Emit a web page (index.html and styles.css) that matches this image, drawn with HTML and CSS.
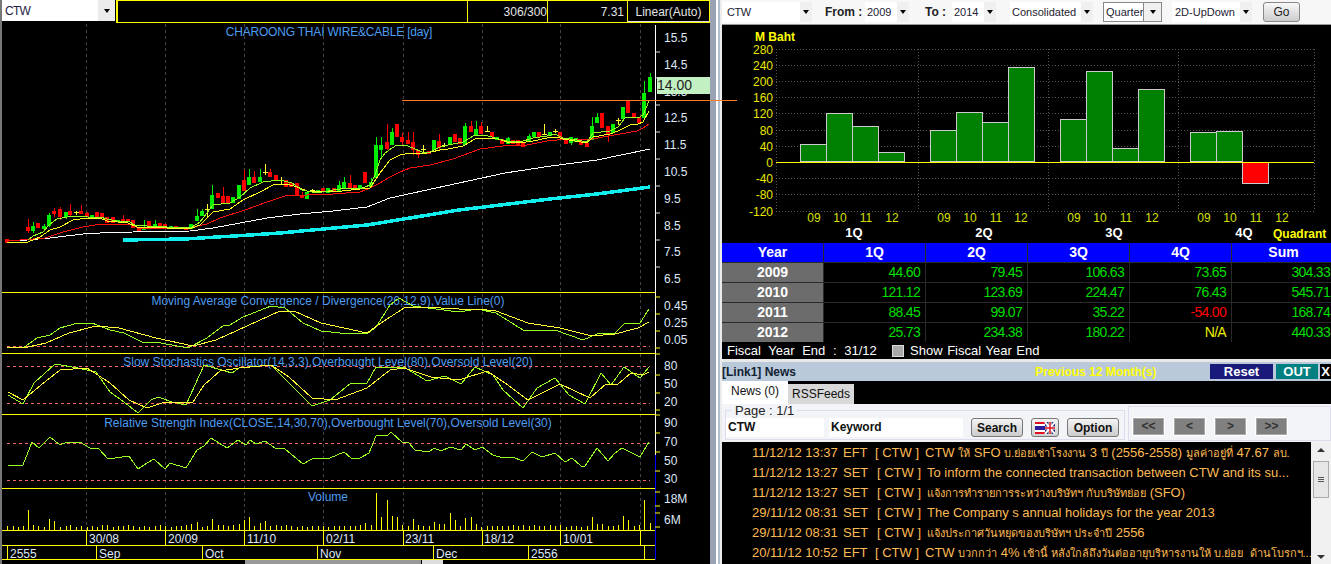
FILE: index.html
```html
<!DOCTYPE html>
<html lang="th">
<head>
    <meta charset="UTF-8">
    <meta name="viewport" content="width=device-width, initial-scale=1.0">
    <title>CTW</title>
    <link rel="stylesheet" href="styles.css">
</head>
<body>
<div class="app">
    <section class="left">
        <div class="left-bar">
            <div class="combo sym-combo"><span>CTW</span><i class="arrow"></i></div>
            <div class="stat-box">
                <div class="stat-fill"></div>
                <div class="stat">306/300</div>
                <div class="stat stat-atr">7.31</div>
                <div class="stat stat-scale">Linear(Auto)</div>
            </div>
        </div>

        <svg class="stock" width="708" height="538" viewBox="2 22 708 538">
            <!-- vertical grid -->
            <path class="grid" d="M86 24V530M165 24V530M244 24V530M323 24V530M403 24V530M482 24V530M560 24V530M640 24V530"/>

            <!-- price panel -->
            <text class="title title-main" x="329" y="36" text-anchor="middle">CHAROONG THAI WIRE&amp;CABLE [day]</text>
            <path class="wick-red" d="M28 219V233M54 208V217M60 207V220M70 204V216M81 205V214M87 212V217M123 215V222M223 187V204M244 170V191M254 171V183M270 169V177M302 192V198M350 175V188M387 124V150M402 133V145M408 132V144M413 132V155M418 150V158M439 134V150M471 121V132M481 122V134M608 126V142"/>
            <path class="wick-green" d="M33 222V233M44 224V229M49 213V227M66 212V219M144 220V230M155 220V227M197 209V221M202 209V216M212 185V209M249 169V185M260 169V182M339 181V192M344 177V188M371 178V187M376 137V178M381 137V157M392 128V145M465 123V145M476 121V135M508 137V144M529 134V142M571 137V145M592 117V140M597 113V123M644 81V118M650 73V92"/>
            <path class="body-red" d="M7 239V243M28 227V231M38 223V228M54 211V214M60 209V217M70 211V215M81 211V214M87 213V217M97 212V217M102 213V217M107 217V223M113 217V223M123 219V222M128 219V221M133 220V228M139 227V231M149 221V226M160 223V226M165 224V229M176 226V228M186 227V230M218 193V198M223 196V203M228 196V203M244 180V191M254 177V183M270 172V177M276 175V180M286 180V187M291 183V187M297 183V195M302 195V198M323 188V192M334 188V192M350 183V188M355 185V189M365 172V183M387 142V149M397 124V137M402 137V142M408 140V144M413 142V150M418 150V155M429 151V154M439 141V148M455 134V142M460 138V144M471 126V132M481 126V134M492 132V137M502 139V144M513 140V144M518 140V145M523 143V147M539 132V137M560 132V138M566 140V144M581 141V145M587 143V147M602 113V128M608 126V134M628 101V113M634 113V118M639 117V123"/>
            <path class="body-green" d="M33 226V231M44 226V229M49 215V226M66 212V217M92 215V217M118 220V222M144 227V230M155 224V227M171 226V229M181 227V229M191 224V229M197 216V221M202 211V216M212 195V209M233 197V203M239 185V199M249 177V185M260 177V182M307 192V199M318 190V193M328 188V193M339 185V192M344 182V188M360 185V188M371 182V187M376 145V178M381 145V150M392 132V145M434 140V150M450 137V145M465 126V145M476 129V135M497 137V140M508 138V144M529 136V142M534 132V137M550 132V136M571 137V143M576 138V142M592 126V140M597 117V123M613 124V133M623 107V119M644 93V118M650 77V92"/>
            <path class="doji" d="M76 211V215M74 212h5M207 204V218M205 209h5M265 164V175M263 172h5M281 177V185M279 180h5M312 189V192M310 190h5M423 145V153M421 149h5M444 143V147M442 145h5M487 126V132M485 131h5M544 124V135M542 134h5M555 129V133M553 131h5M618 118V125M616 120h5"/>

            <polyline class="ma-white" points="7,240 27,240 50,238 83,234 100,233 133,232 190,231 213,228 240,223 267,218 300,214 333,211 367,207 390,198 459,183 505,173 551,166 597,160 650,149"/>
            <polyline class="ma-red" points="7,241 33,239 45,238 63,232 83,227 95,225 110,224 133,224 138,229 193,227 207,224 220,218 245,210 267,202 285,196 307,195 333,194 360,192 370,188 380,183 390,177 400,172 410,168 430,165 453,159 480,149 503,146 527,145 547,141 567,139 587,140 603,137 620,134 637,131 643,128 649,124"/>
            <polyline class="ma-mid" points="7,242 28,242 40,237 50,230 60,227 73,220 87,218 100,218 107,221 128,223 137,227 167,228 192,228 200,225 213,212 230,209 243,200 260,192 273,185 287,184 297,187 307,191 333,192 360,189 370,188 380,173 390,160 400,155 410,153 422,154 440,150 448,149 463,146 475,139 495,138 507,142 520,143 533,141 547,138 557,137 563,139 587,143 593,137 610,134 618,131 630,125 638,124 643,122 649,111"/>
            <polyline class="ma-fast" points="28,240 33,236 43,232 49,225 57,219 67,217 78,216 88,217 100,217 107,219 117,221 128,221 135,225 147,226 167,227 192,227 200,222 213,205 230,203 240,197 250,188 263,182 280,180 292,183 302,190 317,193 333,190 347,188 360,189 370,185 375,175 380,160 385,153 392,148 397,145 405,145 413,148 422,152 430,152 440,147 448,145 463,142 475,135 485,135 495,138 507,141 520,142 533,138 547,136 555,134 563,138 577,140 587,142 593,133 610,131 618,127 625,118 630,117 638,118 643,115 649,101"/>
            <polyline class="ma-cyan" points="123,240 185,239 250,235 280,233 367,225 459,210 550,199 597,194 650,187"/>

            <!-- price scale -->
            <path class="axis" d="M655.5 25V455"/>
            <path class="axis-blue" d="M655.5 455V560"/>
            <path class="tick-white" d="M655 52h5M655 78h5M655 105h5M655 132h5M655 159h5M655 186h5M655 213h5M655 240h5M655 267h5"/>
            <g class="scale">
                <text x="664" y="42">15.5</text>
                <text x="664" y="69">14.5</text>
                <text x="664" y="96">13.5</text>
                <text x="664" y="122">12.5</text>
                <text x="664" y="149">11.5</text>
                <text x="664" y="176">10.5</text>
                <text x="664" y="203">9.5</text>
                <text x="664" y="230">8.5</text>
                <text x="664" y="256">7.5</text>
                <text x="664" y="283">6.5</text>
            </g>
            <rect class="price-tag" x="657" y="77" width="53" height="17"/>
            <text class="price-text" x="657" y="90">14.00</text>

            <!-- panel separators -->
            <path class="sep" d="M2 292.5H655M2 353.5H655M2 414.5H655M2 488.5H655M2 530.5H655M2 545.5H655M2 559.5H655"/>

            <!-- MACD -->
            <text class="title" x="328" y="305" text-anchor="middle">Moving Average Convergence / Divergence(26,12,9),Value Line(0)</text>
            <path class="level" d="M7 346.5H650"/>
            <polyline class="ind-fast" points="7,347 23,348 37,338 50,335 60,328 78,323 92,323 110,330 124,333 142,342 161,343 188,348 207,338 223,326 230,325 243,317 271,306 285,308 303,323 321,331 340,333 367,334 376,327 390,305 399,298 413,306 436,309 459,312 477,309 496,313 523,330 555,330 583,340 597,334 615,333 624,324 640,323 649,309"/>
            <polyline class="ind-slow" points="7,347 28,347 46,343 69,333 96,326 119,328 156,338 193,346 216,340 280,311 294,311 321,323 367,333 381,323 404,308 422,307 459,309 477,309 496,311 528,323 560,328 592,336 615,334 638,328 649,322"/>
            <path class="tick" d="M655 297h5M655 314h5M655 331h5M655 348h5"/>
            <g class="scale">
                <text x="664" y="310">0.45</text>
                <text x="664" y="327">0.25</text>
                <text x="664" y="344">0.05</text>
            </g>

            <!-- stochastics -->
            <text class="title" x="328" y="366" text-anchor="middle">Slow Stochastics Oscillator(14,3,3),Overbought Level(80),Oversold Level(20)</text>
            <path class="level" d="M7 366.5H650M7 403.5H650"/>
            <polyline class="ind-fast" points="8,395 23,404 34,383 55,364 78,368 96,372 110,392 124,402 138,413 151,400 158,397 172,402 186,405 204,365 232,373 239,368 271,365 294,388 312,406 330,400 351,383 367,383 376,367 404,367 427,381 445,376 461,384 475,367 493,375 503,390 523,408 537,388 555,378 569,395 585,404 601,373 611,385 624,367 640,378 649,367"/>
            <polyline class="ind-slow" points="8,392 23,400 41,385 60,370 87,368 110,383 129,400 147,408 165,402 193,402 204,385 220,371 239,368 271,365 289,377 312,398 335,400 367,388 390,370 404,368 431,377 459,380 487,371 505,383 528,400 560,384 590,398 606,384 617,385 631,373 643,375 649,372"/>
            <path class="tick" d="M655 354h5M655 375h5M655 393h5M655 410h5"/>
            <g class="scale">
                <text x="664" y="370">80</text>
                <text x="664" y="388">50</text>
                <text x="664" y="406">20</text>
            </g>

            <!-- RSI -->
            <text class="title" x="328" y="427" text-anchor="middle">Relative Strength Index(CLOSE,14,30,70),Overbought Level(70),Oversold Level(30)</text>
            <path class="level" d="M7 443.5H650M7 480.5H650"/>
            <polyline class="ind-fast" points="8,465 23,465 32,442 39,448 50,437 60,445 67,442 73,443 80,442 90,448 99,449 108,459 129,456 138,469 147,463 154,459 165,469 170,463 186,468 197,450 204,446 211,438 227,448 238,440 246,445 250,440 256,444 265,441 275,448 285,449 303,464 312,459 330,458 344,452 351,458 360,458 369,453 376,436 388,435 391,432 402,442 408,442 415,450 429,452 434,448 441,451 450,447 461,450 466,444 475,450 482,447 493,455 503,458 512,457 523,461 532,452 542,457 555,453 565,462 572,458 581,466 585,466 597,448 608,461 615,453 622,448 640,457 649,442"/>
            <path class="tick" d="M655 415h5M655 433h5M655 452h5M655 471h5"/>
            <g class="scale">
                <text x="664" y="427">90</text>
                <text x="664" y="446">70</text>
                <text x="664" y="465">50</text>
                <text x="664" y="483">30</text>
            </g>

            <!-- volume -->
            <text class="title" x="328" y="501" text-anchor="middle">Volume</text>
            <path class="vol" d="M7 526V530M13 526V530M18 527V530M23 526V530M28 510V530M33 525V530M38 526V530M44 527V530M49 519V530M54 521V530M60 527V530M66 526V530M70 525V530M76 527V530M81 526V530M87 527V530M92 526V530M97 527V530M102 525V530M107 525V530M113 527V530M118 526V530M123 526V530M128 525V530M133 526V530M139 527V530M144 526V530M149 527V530M155 526V530M160 525V530M165 526V530M171 527V530M176 526V530M181 526V530M186 525V530M191 524V530M197 522V530M202 527V530M207 526V530M212 519V530M218 525V530M223 525V530M228 526V530M233 525V530M239 524V530M244 520V530M249 517V530M254 526V530M260 523V530M265 521V530M270 526V530M276 525V530M281 526V530M286 525V530M291 526V530M297 527V530M302 526V530M307 527V530M312 526V530M318 526V530M323 526V530M328 527V530M334 526V530M339 526V530M344 526V530M350 526V530M355 526V530M360 525V530M365 523V530M371 525V530M376 493V530M381 517V530M387 500V530M392 516V530M397 517V530M402 525V530M408 526V530M413 519V530M418 525V530M423 526V530M429 526V530M434 522V530M439 524V530M444 524V530M450 513V530M455 520V530M460 526V530M465 518V530M471 517V530M476 524V530M481 527V530M487 526V530M492 526V530M497 526V530M502 526V530M508 526V530M513 525V530M518 526V530M523 525V530M529 526V530M534 525V530M539 526V530M544 526V530M550 525V530M555 526V530M560 525V530M566 527V530M571 526V530M576 526V530M581 527V530M587 526V530M592 517V530M597 524V530M602 524V530M608 526V530M613 526V530M618 525V530M623 516V530M628 520V530M634 526V530M639 525V530M644 500V530M650 523V530"/>
            <path class="tick" d="M655 492h5M655 506h5M655 513h5M655 527h5"/>
            <g class="scale">
                <text x="664" y="503">18M</text>
                <text x="664" y="524">6M</text>
            </g>

            <!-- date strips -->
            <path class="sep" d="M86 530V545M165 530V545M244 530V545M323 530V545M403 530V545M482 530V545M560 530V545M640 530V545M7 545V560M96 545V560M202 545V560M317 545V560M433 545V560M528 545V560M644 545V560"/>
            <g class="dates">
                <text x="89" y="543">30/08</text>
                <text x="168" y="543">20/09</text>
                <text x="247" y="543">11/10</text>
                <text x="326" y="543">02/11</text>
                <text x="405" y="543">23/11</text>
                <text x="484" y="543">18/12</text>
                <text x="563" y="543">10/01</text>
                <text x="10" y="558">2555</text>
                <text x="99" y="558">Sep</text>
                <text x="205" y="558">Oct</text>
                <text x="320" y="558">Nov</text>
                <text x="436" y="558">Dec</text>
                <text x="531" y="558">2556</text>
            </g>
        </svg>

        <div class="left-scroll">
            <div class="scroll-thumb"></div>
            <div class="scroll-btn"></div>
        </div>
    </section>

    <div class="splitter"></div>

    <section class="right">
        <div class="fin-bar">
            <div class="combo c-sym"><span>CTW</span><i class="arrow"></i></div>
            <label class="fin-label l-from">From :</label>
            <div class="combo c-year"><span>2009</span><i class="arrow"></i></div>
            <label class="fin-label l-to">To :</label>
            <div class="combo c-year"><span>2014</span><i class="arrow"></i></div>
            <div class="combo c-cons"><span>Consolidated</span><i class="arrow"></i></div>
            <div class="combo c-period"><span>Quarter</span><i class="arrow"></i></div>
            <div class="combo c-type"><span>2D-UpDown</span><i class="arrow"></i></div>
            <button class="go-btn">Go</button>
        </div>

        <svg class="fin-chart" width="609" height="218" viewBox="722 25 609 218">
            <text class="axis-title" x="755" y="41">M Baht</text>
            <path class="fin-grid" d="M776 49H1314M776 65H1314M776 81H1314M776 97H1314M776 113H1314M776 130H1314M776 146H1314M776 178H1314M776 194H1314M776 211H1314M918 49V211M1048 49V211M1178 49V211M776 49V211M1314 49V211"/>
            <rect class="bar-up" x="800.500" y="144.500" width="26" height="17"/>
            <rect class="bar-up" x="826.500" y="113.500" width="26" height="48"/>
            <rect class="bar-up" x="852.500" y="126.500" width="26" height="35"/>
            <rect class="bar-up" x="878.500" y="152.500" width="26" height="9"/>
            <rect class="bar-up" x="930.500" y="130.500" width="26" height="31"/>
            <rect class="bar-up" x="956.500" y="112.500" width="26" height="49"/>
            <rect class="bar-up" x="982.500" y="122.500" width="26" height="39"/>
            <rect class="bar-up" x="1008.500" y="67.500" width="26" height="94"/>
            <rect class="bar-up" x="1060.500" y="119.500" width="26" height="42"/>
            <rect class="bar-up" x="1086.500" y="71.500" width="26" height="90"/>
            <rect class="bar-up" x="1112.500" y="148.500" width="26" height="13"/>
            <rect class="bar-up" x="1138.500" y="89.500" width="26" height="72"/>
            <rect class="bar-up" x="1190.500" y="132.500" width="26" height="29"/>
            <rect class="bar-up" x="1216.500" y="131.500" width="26" height="30"/>
            <rect class="bar-down" x="1242.500" y="162.500" width="26" height="21"/>
            <path class="zero" d="M776 162.500H1314"/>
            <g class="fin-y">
                <text x="773" y="54">280</text>
                <text x="773" y="70">240</text>
                <text x="773" y="86">200</text>
                <text x="773" y="102">160</text>
                <text x="773" y="118">120</text>
                <text x="773" y="135">80</text>
                <text x="773" y="151">40</text>
                <text x="773" y="167">0</text>
                <text x="773" y="183">-40</text>
                <text x="773" y="199">-80</text>
                <text x="773" y="216">-120</text>
            </g>
            <g class="fin-yr">
                <text x="814" y="222">09</text><text x="840" y="222">10</text><text x="866" y="222">11</text><text x="892" y="222">12</text>
                <text x="944" y="222">09</text><text x="970" y="222">10</text><text x="996" y="222">11</text><text x="1021" y="222">12</text>
                <text x="1074" y="222">09</text><text x="1100" y="222">10</text><text x="1126" y="222">11</text><text x="1152" y="222">12</text>
                <text x="1204" y="222">09</text><text x="1230" y="222">10</text><text x="1256" y="222">11</text><text x="1282" y="222">12</text>
            </g>
            <g class="fin-q">
                <text x="854" y="237">1Q</text>
                <text x="984" y="237">2Q</text>
                <text x="1114" y="237">3Q</text>
                <text x="1244" y="237">4Q</text>
            </g>
            <text class="axis-title" x="1273" y="238">Quadrant</text>
        </svg>

        <div class="fin-table">
            <div class="th">Year</div><div class="th">1Q</div><div class="th">2Q</div><div class="th">3Q</div><div class="th">4Q</div><div class="th">Sum</div>
            <div class="yr">2009</div><div class="td">44.60</div><div class="td">79.45</div><div class="td">106.63</div><div class="td">73.65</div><div class="td">304.33</div>
            <div class="yr">2010</div><div class="td">121.12</div><div class="td">123.69</div><div class="td">224.47</div><div class="td">76.43</div><div class="td">545.71</div>
            <div class="yr">2011</div><div class="td">88.45</div><div class="td">99.07</div><div class="td">35.22</div><div class="td neg">-54.00</div><div class="td">168.74</div>
            <div class="yr">2012</div><div class="td">25.73</div><div class="td">234.38</div><div class="td">180.22</div><div class="td na">N/A</div><div class="td">440.33</div>
        </div>

        <div class="fiscal">
            <span class="fiscal-end">Fiscal Year End : 31/12</span>
            <i class="check"></i>
            <span class="fiscal-show">Show Fiscal Year End</span>
        </div>

        <div class="news-bar">
            <b class="news-title">[Link1] News</b>
            <b class="news-period">Previous 12 Month(s)</b>
            <div class="bar-btn btn-reset">Reset</div>
            <div class="bar-btn btn-out">OUT</div>
            <div class="bar-btn btn-x">X</div>
        </div>

        <div class="tabs">
            <div class="tab tab-on">News (0)</div>
            <div class="tab">RSSFeeds</div>
        </div>

        <div class="tools">
            <fieldset class="page-box">
                <legend>Page : 1/1</legend>
                <div class="tool-row">
                    <div class="field f-sym">CTW</div>
                    <div class="field f-key">Keyword</div>
                    <button class="tool-btn b-search">Search</button>
                    <button class="tool-btn b-flag">
                        <svg width="20" height="12" viewBox="0 0 20 12">
                            <rect width="20" height="12" fill="#e01020"/>
                            <rect y="2" width="20" height="8" fill="#fff"/>
                            <rect y="4" width="20" height="4" fill="#2a1a9a"/>
                            <path d="M10 0H20V12H10Z" fill="#1c2a6e"/>
                            <path d="M10 0L20 12M20 0L10 12" stroke="#fff" stroke-width="2"/>
                            <path d="M15 0V12M10 6H20" stroke="#fff" stroke-width="3"/>
                            <path d="M15 0V12M10 6H20" stroke="#e01020" stroke-width="1.500"/>
                        </svg>
                    </button>
                    <button class="tool-btn b-option">Option</button>
                </div>
            </fieldset>
            <div class="pager">
                <div class="page-btn">&lt;&lt;</div>
                <div class="page-btn">&lt;</div>
                <div class="page-btn">&gt;</div>
                <div class="page-btn">&gt;&gt;</div>
            </div>
        </div>

        <div class="news">
            <div class="news-list">
                <div class="row"><span class="dt">11/12/12 13:37</span><span class="src">EFT</span><span class="tag">[ CTW ]</span><span>CTW <span class="thai">ให้</span> SFO <span class="thai">บ.ย่อยเช่าโรงงาน</span> 3 <span class="thai">ปี</span> (2556-2558) <span class="thai">มูลค่าอยู่ที่</span> 47.67 <span class="thai">ลบ.</span></span></div>
                <div class="row"><span class="dt">11/12/12 13:27</span><span class="src src-set">SET</span><span class="tag">[ CTW ]</span><span>To inform the connected transaction between CTW and its su...</span></div>
                <div class="row"><span class="dt">11/12/12 13:27</span><span class="src src-set">SET</span><span class="tag">[ CTW ]</span><span><span class="thai">แจ้งการทำรายการระหว่างบริษัทฯ กับบริษัทย่อย</span> (SFO)</span></div>
                <div class="row"><span class="dt">29/11/12 08:31</span><span class="src src-set">SET</span><span class="tag">[ CTW ]</span><span>The Company s annual holidays for the year 2013</span></div>
                <div class="row"><span class="dt">29/11/12 08:31</span><span class="src src-set">SET</span><span class="tag">[ CTW ]</span><span><span class="thai">แจ้งประกาศวันหยุดของบริษัทฯ ประจำปี</span> 2556</span></div>
                <div class="row"><span class="dt">20/11/12 10:52</span><span class="src">EFT</span><span class="tag">[ CTW ]</span><span>CTW <span class="thai">บวกกว่า</span> 4% <span class="thai">เช้านี้ หลังใกล้ถึงวันต่ออายุบริหารงานให้ บ.ย่อย  ด้านโบรกฯ...</span></span></div>
            </div>
            <div class="vscroll">
                <div class="vs-up"></div>
                <div class="vs-thumb"><i></i><i></i><i></i></div>
                <div class="vs-down"></div>
            </div>
        </div>
    </section>

    <!-- cursor line runs over the splitter into the next pane -->
    <div class="cursor-line"></div>
</div>
</body>
</html>
```

FILE: styles.css
```css
html, body {
    margin: 0;
    padding: 0;
    height: 100%;
    overflow: hidden;
    background: #000;
}

body {
    font-family: "Liberation Sans", "Noto Sans", "DejaVu Sans", sans-serif;
    font-size: 12px;
}

.app {
    position: relative;
    display: flex;
    width: 1331px;
    height: 564px;
    overflow: hidden;
}

/* left pane */
.left {
    width: 708px;
    border-left: 2px solid #777;
    background: #000;
    display: flex;
    flex-direction: column;
}

.left-bar {
    display: flex;
    height: 22px;
}

.combo {
    display: flex;
    flex: none;
    align-items: center;
    justify-content: space-between;
    background: #fff;
    color: #223;
    padding-left: 5px;
    box-sizing: border-box;
    white-space: nowrap;
    font-size: 11px;
}

.sym-combo {
    width: 113px;
    height: 21px;
    margin-right: 1px;
    padding-left: 3px;
    color: #224;
    font-size: 12px;
    letter-spacing: -.7px;
}

.arrow {
    display: flex;
    align-items: center;
    justify-content: center;
    width: 17px;
    align-self: stretch;
    background: #ececec;
}

.arrow::after {
    content: "";
    border-left: 3px solid transparent;
    border-right: 3px solid transparent;
    border-top: 4px solid #000;
}

.stat-box {
    flex: 1;
    display: flex;
    border: 1px solid #ff0;
    border-left-width: 2px;
    box-sizing: border-box;
    height: 23px;
    color: #e4e4e4;
}

.stat-fill {
    flex: 1;
}

.stat {
    width: 80px;
    box-sizing: border-box;
    border-left: 1px solid #ff0;
    text-align: right;
    line-height: 22px;
}

.stat-atr {
    padding-right: 3px;
}

.stat-scale {
    width: 82px;
    text-align: center;
    border-bottom: 1px solid #ddd;
}

.stock {
    display: block;
    flex: none;
}

.stock path, .stock polyline, .fin-chart path {
    fill: none;
}

.stock polyline {
    shape-rendering: crispEdges;
}

.stock text {
    font-family: "Liberation Sans", sans-serif;
    font-size: 12px;
}

.grid {
    stroke: #444;
    stroke-dasharray: 3 3;
    shape-rendering: crispEdges;
}

.title {
    fill: #4d9cf0;
}

.title-main {
    letter-spacing: -.2px;
}

.wick-red { stroke: #f00; shape-rendering: crispEdges; }
.wick-green { stroke: #0e0; shape-rendering: crispEdges; }
.body-red { stroke: #f00; stroke-width: 4; shape-rendering: crispEdges; }
.body-green { stroke: #0e0; stroke-width: 4; shape-rendering: crispEdges; }
.doji { stroke: #ff3; shape-rendering: crispEdges; }

.ma-fast { stroke: #9f2; }
.ma-mid { stroke: #ff2; }
.ma-red { stroke: #f11; }
.ma-white { stroke: #fff; }
.ma-cyan { stroke: #1ee; stroke-width: 3.5; }

.axis { stroke: #fff; }
.axis-blue { stroke: #00f; }
.tick-white { stroke: #ddd; }
.tick { stroke: #ff0; }
.sep { stroke: #ff0; shape-rendering: crispEdges; }

.scale text, .dates text {
    fill: #dfe8f8;
}

.price-tag { fill: #c2f0c2; }
.price-text { fill: #222; font-size: 14px !important; }

.level {
    stroke: #f66;
    stroke-dasharray: 3 3;
    shape-rendering: crispEdges;
}

.ind-fast { stroke: #9f2; }
.ind-slow { stroke: #ff3; }
.vol { stroke: #ff0; shape-rendering: crispEdges; }

.left-scroll {
    flex: 1;
    display: flex;
    justify-content: flex-end;
    padding-right: 267px;
}

.scroll-thumb {
    width: 176px;
    background: #999;
}

.scroll-btn {
    width: 21px;
    margin-left: 1px;
    background: #ddd;
}

.splitter {
    width: 12px;
    background: linear-gradient(to right, #9aa3b5 0 6px, #fff 6px 8px, #b4c0d0 8px 10px, #ececec 10px);
}

.cursor-line {
    position: absolute;
    left: 402px;
    top: 100px;
    width: 335px;
    height: 1px;
    background: #ff7a20;
}

/* right pane */
.right {
    width: 609px;
    background: #000;
    overflow: hidden;
}

.fin-bar {
    display: flex;
    align-items: center;
    height: 25px;
    box-sizing: border-box;
    background: #f7f7f7;
    border-bottom: 1px solid #999;
    color: #222;
}

.fin-bar .combo {
    height: 20px;
    background: #fff;
}

.fin-bar .arrow {
    width: 12px;
    background: #f0f0f0;
}

.c-sym { width: 90px; letter-spacing: -.5px; }
.c-year { width: 44px; padding-left: 2px; }
.c-cons { width: 83px; margin-left: 14px; padding-left: 2px; }
.c-period { width: 59px; margin-left: 10px; border: 1px solid #888; padding-left: 2px; }
.c-period .arrow { width: 17px; border-left: 1px solid #888; }
.c-type { width: 80px; margin-left: 10px; padding-left: 3px; }

.fin-label {
    flex: none;
    font-weight: bold;
    color: #222;
    white-space: pre;
}

.l-from { margin-left: 13px; margin-right: 3px; width: 37px; }
.l-to { margin-left: 16px; margin-right: 7px; width: 20px; }

.go-btn {
    width: 37px;
    height: 20px;
    margin-left: 11px;
    padding: 0;
    border: 1px solid #888;
    border-radius: 3px;
    background: linear-gradient(#f8f8f8, #ccc);
    font: 12px "Liberation Sans", sans-serif;
    color: #222;
}

.fin-chart {
    display: block;
}

.fin-chart text {
    font-family: "Liberation Sans", sans-serif;
    font-size: 12px;
}

.axis-title {
    fill: #ff0;
    font-weight: bold;
}

.fin-grid {
    stroke: #555;
    stroke-dasharray: 1 2;
    shape-rendering: crispEdges;
}

.bar-up { fill: #008000; stroke: #ccc; }
.bar-down { fill: #f00; stroke: #ccc; }
.zero { stroke: #ff0; shape-rendering: crispEdges; }

.fin-y text { fill: #e8e800; text-anchor: end; }
.fin-yr text { fill: #d8e000; text-anchor: middle; }
.fin-q text { fill: #fff; font-weight: bold; text-anchor: middle; font-size: 13px !important; }

.fin-table {
    display: grid;
    grid-template-columns: repeat(5, 101px) 103px;
    grid-auto-rows: 19px;
    gap: 1px;
    background: #2a2a2a;
    line-height: 19px;
    font-size: 14px;
}

.th {
    background: #00f;
    color: #fff;
    font-weight: bold;
    text-align: center;
}

.yr {
    background: #6c6c6c;
    color: #fff;
    font-weight: bold;
    text-align: center;
}

.td {
    background: #000;
    color: #0d0;
    text-align: right;
    padding-right: 5px;
    letter-spacing: -.7px;
}

.td.neg { color: #f00; }
.td.na { color: #ee0; }

.fiscal {
    display: flex;
    align-items: center;
    height: 17px;
    padding-left: 5px;
    color: #fff;
    font-size: 13px;
    white-space: nowrap;
}

.fiscal-end {
    width: 165px;
    word-spacing: 4px;
}

.fiscal-show {
    word-spacing: 1px;
}

.check {
    width: 10px;
    height: 10px;
    margin-right: 6px;
    background: #aaa;
    border: 1px solid #ddd;
}

.news-bar {
    display: flex;
    align-items: center;
    height: 19px;
    margin-top: 3px;
    background: #b9c9d9;
    box-shadow: 0 -3px 0 #e8e8e8;
}

.news-title {
    width: 313px;
    color: #123;
}

.news-period {
    width: 175px;
    color: #ff0;
}

.bar-btn {
    height: 15px;
    line-height: 15px;
    text-align: center;
    font-weight: bold;
    font-size: 13px;
    color: #fff;
}

.btn-reset { width: 63px; background: #1a1a7a; }
.btn-out { width: 42px; margin-left: 3px; background: #008080; }
.btn-x { width: 11px; margin-left: 2px; background: #000; }

.tabs {
    display: flex;
    align-items: flex-end;
    height: 23px;
    background: #000;
}

.tab {
    width: 66px;
    height: 20px;
    line-height: 20px;
    text-align: center;
    background: #d8d8d8;
    color: #111;
}

.tab-on {
    height: 23px;
    line-height: 21px;
    background: #fff;
}

.tools {
    display: flex;
    height: 38px;
    box-sizing: border-box;
    background: #f2f4f7;
    padding-left: 3px;
}

.page-box {
    width: 400px;
    height: 36px;
    margin: 0;
    padding: 0;
    box-sizing: border-box;
    border: 1px solid #dde;
    min-width: 0;
}

.page-box legend {
    margin-left: 6px;
    padding: 0 3px;
    line-height: 13px;
    font-size: 13px;
    color: #222;
}

.tool-row {
    display: flex;
    align-items: center;
    gap: 8px;
    margin-top: 1px;
}

.field {
    height: 19px;
    line-height: 19px;
    background: #fff;
    font-weight: bold;
    color: #111;
    padding-left: 2px;
    box-sizing: border-box;
}

.f-sym { width: 98px; margin-right: -3px; }
.f-key { width: 134px; }

.tool-btn {
    display: flex;
    align-items: center;
    justify-content: center;
    height: 19px;
    padding: 0;
    border: 1px solid #777;
    border-radius: 3px;
    background: linear-gradient(#f4f4f4, #ccc);
    font: bold 12px "Liberation Sans", sans-serif;
    color: #111;
}

.b-search { width: 52px; }
.b-flag { width: 28px; }
.b-option { width: 52px; }

.pager {
    flex: 1;
    display: flex;
    gap: 10px;
    margin: 2px 0 1px 3px;
    padding: 11px 0 0 4px;
    border: 1px solid #dde;
}

.page-btn {
    width: 29px;
    height: 15px;
    line-height: 15px;
    text-align: center;
    background: #808080;
    border: 1px solid #aaa;
    outline: 1px solid #fff;
    color: #333;
    font-weight: bold;
}

.news {
    display: flex;
    height: 122px;
    margin-left: 2px;
}

.news-list {
    flex: 1;
    min-width: 0;
    padding: 1px 0 0 28px;
    color: #fdbb55;
    font-size: 13px;
    overflow: hidden;
}

.row {
    display: flex;
    height: 20px;
    line-height: 20px;
    white-space: pre;
}

.dt, .src, .tag {
    flex: none;
}

.dt { width: 91px; }
.src { width: 32px; }
.src-set { width: 34px; }
.tag { width: 50px; }

.thai {
    font-size: 11px;
}

.vscroll {
    flex: none;
    width: 20px;
    display: flex;
    flex-direction: column;
    align-items: center;
    background: #f0f0f0;
}

.vs-up, .vs-down {
    width: 0;
    margin-top: 6px;
    border-left: 4px solid transparent;
    border-right: 4px solid transparent;
}

.vs-up { border-bottom: 4px solid #333; }
.vs-down { margin-top: 57px; border-top: 4px solid #333; }

.vs-thumb {
    width: 16px;
    height: 37px;
    margin-top: 9px;
    display: flex;
    flex-direction: column;
    align-items: center;
    justify-content: center;
    gap: 1px;
    background: #e6e6e6;
    border: 1px solid #aaa;
    box-sizing: border-box;
}

.vs-thumb i {
    width: 6px;
    height: 1px;
    background: #555;
}
```
